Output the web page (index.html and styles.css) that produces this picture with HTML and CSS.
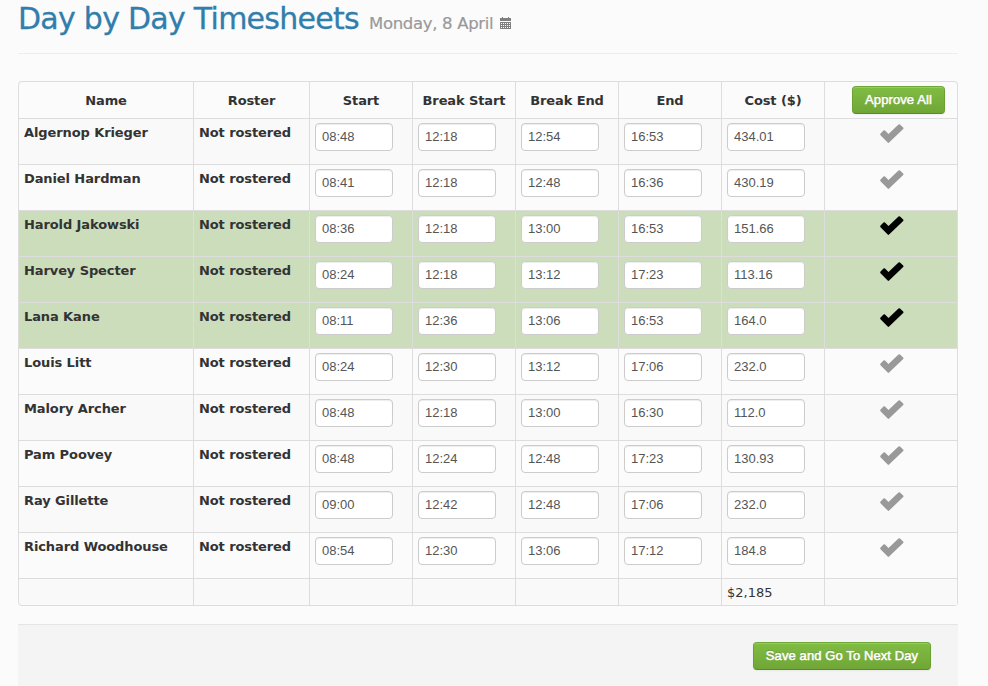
FILE: index.html
```
<!DOCTYPE html>
<html lang="en">
<head>
<meta charset="utf-8">
<title>Day by Day Timesheets</title>
<link rel="stylesheet" href="styles.css">
</head>
<body>
<svg class="defs" aria-hidden="true">
  <symbol id="check" viewBox="0 0 24 20"><path d="M0.5 9.5 L3.5 6.5 Q4.3 5.8 5 6.5 L8.5 10 L18.5 0.5 Q19.3 -0.1 20 0.5 L23.2 3.4 Q23.9 4.2 23.2 4.9 L9.1 18.6 Q8.4 19.3 7.7 18.6 L0.5 11.2 Q-0.1 10.3 0.5 9.5 Z"/></symbol>
</svg>
<main class="page">
  <header class="page-header">
    <h1><span class="title">Day by Day Timesheets</span> <small>Monday, 8 April</small>
      <svg class="calendar" width="11" height="12" viewBox="0 0 11 12" shape-rendering="crispEdges"><path fill-rule="evenodd" d="M0 1h2V0h1v1h5V0h1v1h2v3H0ZM0 5h11v7H0ZM1 6v1h1V6ZM3 6v1h1V6ZM5 6v1h1V6ZM7 6v1h1V6ZM9 6v1h1V6ZM1 8v1h1V8ZM3 8v1h1V8ZM5 8v1h1V8ZM7 8v1h1V8ZM9 8v1h1V8ZM1 10v1h1v-1ZM3 10v1h1v-1ZM5 10v1h1v-1ZM7 10v1h1v-1ZM9 10v1h1v-1Z"/></svg>
    </h1>
  </header>
  <table class="timesheet">
    <colgroup><col class="name"><col class="roster"><col class="time"><col class="time"><col class="time"><col class="time"><col class="time"><col class="approve"></colgroup>
    <thead><tr><th>Name</th><th>Roster</th><th>Start</th><th>Break Start</th><th>Break End</th><th>End</th><th>Cost ($)</th><th><button class="btn approve-all"><span>Approve All</span></button></th></tr></thead>
    <tbody id="rows"></tbody>
    <tfoot><tr><td></td><td></td><td></td><td></td><td></td><td></td><td>$2,185</td><td></td></tr></tfoot>
  </table>
  <div class="form-actions"><button class="btn save"><span>Save and Go To Next Day</span></button></div>
</main>
<script src="script.js"></script>
</body>
</html>
```
FILE: styles.css
```
* { box-sizing: border-box; }
body { margin: 0; background: #fbfbfb; color: #333; font: 13px/20px "DejaVu Sans", sans-serif; overflow: hidden; }
.defs { display: none; }
.page { width: 940px; margin-left: 18px; }
.page-header { height: 54px; border-bottom: 1px solid #eee; margin-bottom: 27px; }
h1 { display: flex; align-items: baseline; margin: 0; padding-top: 0; font-size: 30px; line-height: 38px; font-weight: normal; white-space: nowrap; }
.title { color: #317eac; width: 351px; letter-spacing: -.73px; -webkit-text-stroke: .3px #317eac; }
h1 small { color: #999; font-size: 16.5px; letter-spacing: -.32px; width: 131px; -webkit-text-stroke: .2px #999; }
.calendar { fill: #7f7f7f; }
.timesheet { width: 940px; table-layout: fixed; border-collapse: separate; border-spacing: 0; border: 1px solid #ddd; border-left: 0; border-radius: 4px; margin-bottom: 18px; }
.name { width: 175px; }
.roster { width: 116px; }
.time { width: 103px; }
.approve { width: 133px; }
th, td { padding: 4px 5px; border-left: 1px solid #ddd; vertical-align: top; text-align: left; }
th { letter-spacing: -.1px; }
thead th { height: 36px; padding: 5px 0 3px; text-align: center; line-height: 28px; white-space: nowrap; }
thead th:first-child { border-top-left-radius: 4px; }
tfoot td:first-child { border-bottom-left-radius: 4px; }
tbody td, tbody th, tfoot td { border-top: 1px solid #ddd; }
tbody td, tbody th { height: 46px; }
tbody tr:nth-child(odd), tfoot tr { background: #f9f9f9; }
tbody tr.approved { background: #ccddbb; }
tfoot td { height: 27px; padding: 4px 5px 2px; line-height: 20px; }
tbody th { line-height: 20px; white-space: nowrap; }
input { display: block; width: 78px; height: 28px; padding: 3px 6px 5px; border: 1px solid #ccc; border-radius: 4px; background: #fff; box-shadow: inset 0 1px 1px rgba(0,0,0,.075); color: #555; font: 13px/18px "Liberation Sans", Arial, sans-serif; }
td.status { text-align: center; line-height: 0; }
.check { width: 24px; height: 20px; fill: #999; margin: 1px 0 0 1px; overflow: visible; }
.approved .check { fill: #000; }
.btn { height: 28px; padding: 0; border: 1px solid #6aa132; border-color: #70a838 #6aa132 #588b27; border-radius: 4px; background: linear-gradient(#80bd42, #70a637); box-shadow: inset 0 1px 0 rgba(255,255,255,.2), 0 1px 2px rgba(0,0,0,.05); color: #fff; text-shadow: 0 -1px 0 rgba(0,0,0,.25); font: 13px/18px "Liberation Sans", Arial, sans-serif; letter-spacing: .1px; -webkit-text-stroke: .5px #fff; white-space: nowrap; }
.approve-all { display: block; width: 93px; margin: -1px 0 0 27px; }
.form-actions { height: 62px; border-top: 1px solid #e5e5e5; background: #f4f4f4; padding: 17px 27px 0 0; display: flex; justify-content: flex-end; }
.save { width: 178px; }
```
FILE: script.js
```
const rows = [
  ["Algernop Krieger", "08:48", "12:18", "12:54", "16:53", "434.01"],
  ["Daniel Hardman", "08:41", "12:18", "12:48", "16:36", "430.19"],
  ["Harold Jakowski", "08:36", "12:18", "13:00", "16:53", "151.66", true],
  ["Harvey Specter", "08:24", "12:18", "13:12", "17:23", "113.16", true],
  ["Lana Kane", "08:11", "12:36", "13:06", "16:53", "164.0", true],
  ["Louis Litt", "08:24", "12:30", "13:12", "17:06", "232.0"],
  ["Malory Archer", "08:48", "12:18", "13:00", "16:30", "112.0"],
  ["Pam Poovey", "08:48", "12:24", "12:48", "17:23", "130.93"],
  ["Ray Gillette", "09:00", "12:42", "12:48", "17:06", "232.0"],
  ["Richard Woodhouse", "08:54", "12:30", "13:06", "17:12", "184.8"]
];
document.getElementById("rows").innerHTML = rows.map(r =>
  `<tr class="${r[6] ? "approved" : ""}"><th>${r[0]}</th><th>Not rostered</th>` +
  r.slice(1, 6).map(v => `<td><input type="text" value="${v}"></td>`).join("") +
  `<td class="status"><svg class="check"><use href="#check"/></svg></td></tr>`
).join("");
```
